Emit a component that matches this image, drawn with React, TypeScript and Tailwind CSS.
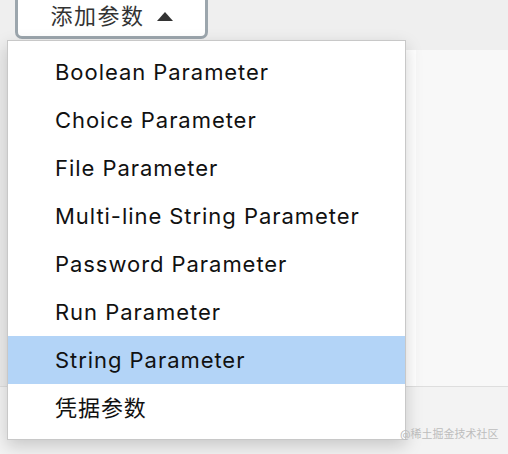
import React from "react";

const items = [
  "Boolean Parameter",
  "Choice Parameter",
  "File Parameter",
  "Multi-line String Parameter",
  "Password Parameter",
  "Run Parameter",
  "String Parameter",
  "凭据参数",
];

export default function App() {
  return (
    <div
      className="relative w-[508px] h-[454px] overflow-hidden bg-[#efefef] flex flex-col"
      style={{ fontFamily: 'Inter, "Noto Sans CJK SC", sans-serif' }}
    >
      {/* Header with add button */}
      <div className="h-[50px] shrink-0 px-[15px]">
        <button className="-mt-[12px] w-[193px] h-[51px] pt-[9px] rounded-b-[7px] border-[3px] border-t-0 border-[#9ca6ad] bg-white flex items-center justify-center gap-[12px] text-[22px] tracking-[1.5px] text-[#333]">
          <span>添加参数</span>
          <svg width="16" height="9" viewBox="0 0 16 9">
            <path d="M8 0 L16 9 L0 9 Z" fill="#333" />
          </svg>
        </button>
      </div>

      {/* Page body behind the menu */}
      <div className="flex h-[337px] shrink-0 border-b border-[#dedede]">
        <div className="w-[8px] bg-[#ececec]" />
        <div className="flex-1 bg-white" />
        <div className="w-[92px] bg-[#f8f8f8]" />
      </div>
      <div className="flex-1 bg-[#f3f3f3]" />

      {/* Dropdown menu */}
      <ul className="absolute left-[7px] top-[40px] w-[399px] bg-white border border-[#c8c8c8] py-[7px] shadow-[0_6px_16px_rgba(0,0,0,0.18)]">
        {items.map((label) => (
          <li
            key={label}
            className={`h-[48px] flex items-center pl-[47px] text-[22px] tracking-[0.95px] text-[#111] ${
              label === "String Parameter" ? "bg-[#b3d4f7]" : ""
            }`}
          >
            {label}
          </li>
        ))}
      </ul>

      {/* Watermark */}
      <span className="absolute left-[400px] top-[426px] text-[11px] text-[#bdbdbd]">
        @稀土掘金技术社区
      </span>
    </div>
  );
}
